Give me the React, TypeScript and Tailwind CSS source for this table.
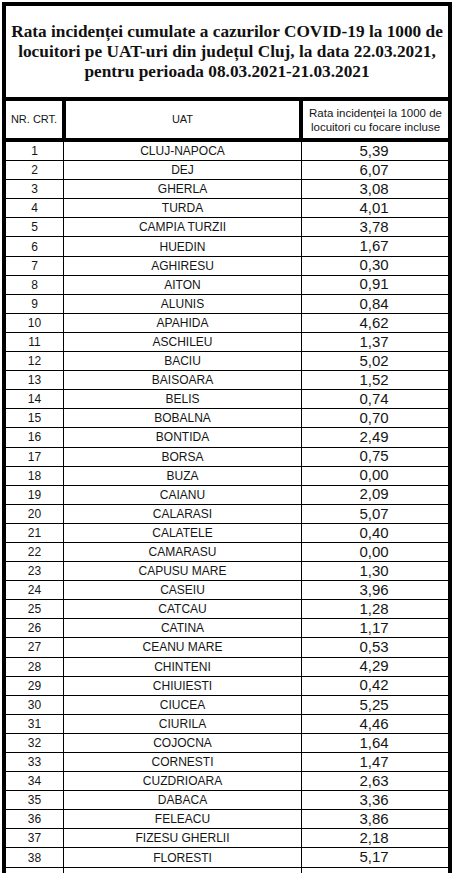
import React from "react";

const rows: [string, string][] = [
  ["CLUJ-NAPOCA", "5,39"],
  ["DEJ", "6,07"],
  ["GHERLA", "3,08"],
  ["TURDA", "4,01"],
  ["CAMPIA TURZII", "3,78"],
  ["HUEDIN", "1,67"],
  ["AGHIRESU", "0,30"],
  ["AITON", "0,91"],
  ["ALUNIS", "0,84"],
  ["APAHIDA", "4,62"],
  ["ASCHILEU", "1,37"],
  ["BACIU", "5,02"],
  ["BAISOARA", "1,52"],
  ["BELIS", "0,74"],
  ["BOBALNA", "0,70"],
  ["BONTIDA", "2,49"],
  ["BORSA", "0,75"],
  ["BUZA", "0,00"],
  ["CAIANU", "2,09"],
  ["CALARASI", "5,07"],
  ["CALATELE", "0,40"],
  ["CAMARASU", "0,00"],
  ["CAPUSU MARE", "1,30"],
  ["CASEIU", "3,96"],
  ["CATCAU", "1,28"],
  ["CATINA", "1,17"],
  ["CEANU MARE", "0,53"],
  ["CHINTENI", "4,29"],
  ["CHIUIESTI", "0,42"],
  ["CIUCEA", "5,25"],
  ["CIURILA", "4,46"],
  ["COJOCNA", "1,64"],
  ["CORNESTI", "1,47"],
  ["CUZDRIOARA", "2,63"],
  ["DABACA", "3,36"],
  ["FELEACU", "3,86"],
  ["FIZESU GHERLII", "2,18"],
  ["FLORESTI", "5,17"],
];

export default function App() {
  return (
    <div className="w-[455px] h-[873px] overflow-hidden bg-white pt-[2px] pl-[2px]">
      <div
        className="w-[450px] border-4 border-b-0 border-black text-[#151515]"
        style={{ fontFamily: '"Liberation Sans", Arial, sans-serif' }}
      >
        <div
          className="h-[91px] flex flex-col items-center justify-center text-center font-bold text-[17.3px] leading-[20px] text-[#111]"
          style={{ fontFamily: '"Liberation Serif", "Times New Roman", serif' }}
        >
          <div>Rata incidenței cumulate a cazurilor COVID-19 la 1000 de</div>
          <div>locuitori pe UAT-uri din județul Cluj, la data 22.03.2021,</div>
          <div>pentru perioada 08.03.2021-21.03.2021</div>
        </div>
        <div className="flex h-[45px] border-t-4 border-b-4 border-black text-[11px]">
          <div className="w-[60px] border-r-4 border-black flex items-center justify-center">
            NR. CRT.
          </div>
          <div className="w-[237px] border-r-4 border-black flex items-center justify-center">
            UAT
          </div>
          <div className="flex-1 flex flex-col items-center justify-center leading-[14px] text-[11.5px]">
            <div>Rata incidenței la 1000 de</div>
            <div>locuitori cu focare incluse</div>
          </div>
        </div>
        {rows.map(([name, val], i) => (
          <div key={i} className="flex h-[19.1px] border-b border-black">
            <div className="w-[58px] border-r border-black flex items-center justify-center text-[12px]">
              {i + 1}
            </div>
            <div className="w-[238px] border-r border-black flex items-center justify-center text-[12px]">
              {name}
            </div>
            <div className="flex-1 flex items-center justify-center text-[15px] pr-[2px]">
              {val}
            </div>
          </div>
        ))}
        <div className="flex h-[19px]">
          <div className="w-[58px] border-r border-black" />
          <div className="w-[238px] border-r border-black" />
          <div className="flex-1" />
        </div>
      </div>
    </div>
  );
}
